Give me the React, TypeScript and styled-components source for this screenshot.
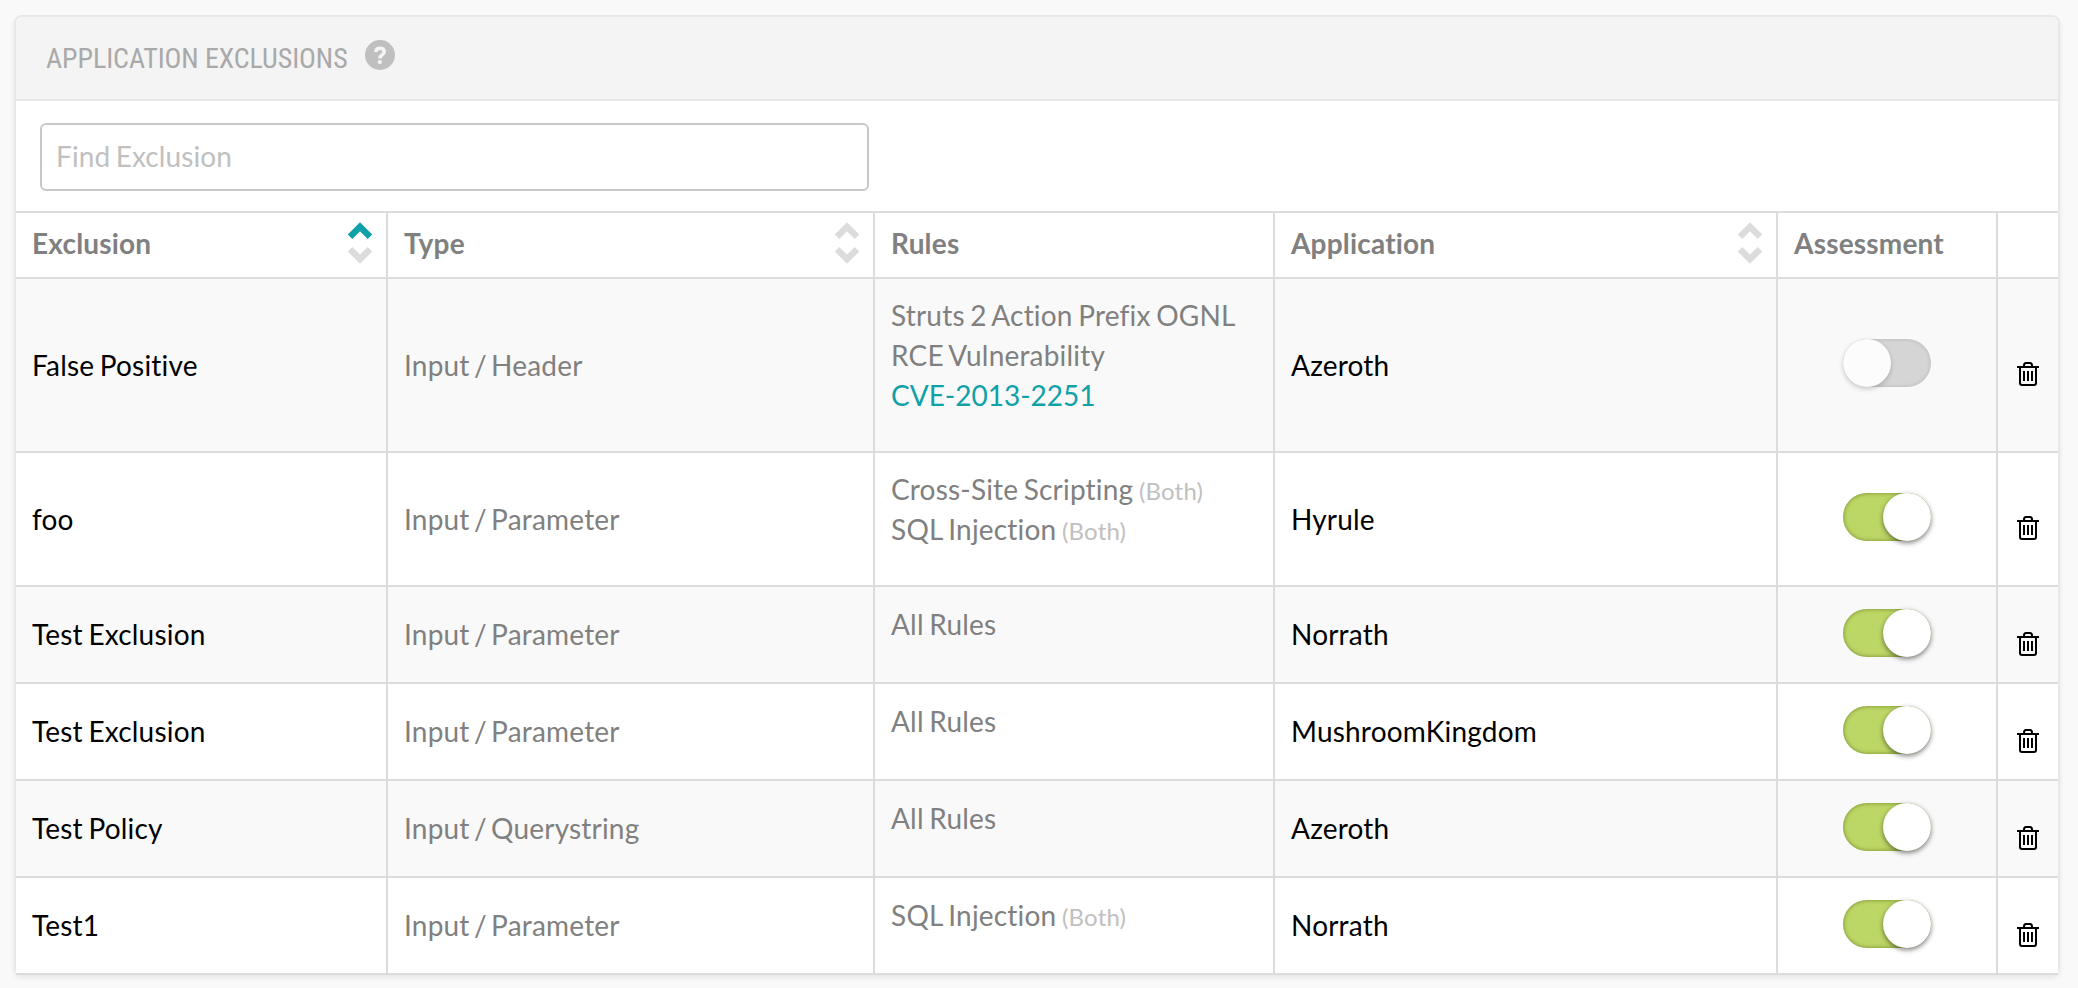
import React from "react";
import styled, { createGlobalStyle } from "styled-components";

const GlobalStyle = createGlobalStyle`
  * { box-sizing: border-box; }
  body {
    margin: 0;
    background: #f9f9f9;
    font-family: Lato, "Open Sans", sans-serif;
    font-size: 28px;
    line-height: 40px;
    letter-spacing: 0.19px;
    word-spacing: -1.8px;
    font-variant-ligatures: none;
    color: #808080;
  }
`;

const Page = styled.main`
  height: 988px;
  padding: 15px 18px 0 14px;
  overflow: hidden;
`;

const Panel = styled.section`
  border: 2px solid #e8e8e8;
  border-bottom: 0;
  border-radius: 8px;
  background: #fff;
  box-shadow: 0 3px 5px rgba(0, 0, 0, 0.08);
`;

const PanelHeader = styled.header`
  display: flex;
  align-items: center;
  height: 84px;
  padding-left: 30px;
  border-bottom: 2px solid #e8e8e8;
  border-radius: 6px 6px 0 0;
  background: #f4f4f4;
`;

const Title = styled.h1`
  width: 319px;
  margin: 2px 0 0;
  font-family: "Roboto Condensed", Roboto, sans-serif;
  font-stretch: 75%;
  font-size: 28px;
  font-weight: 400;
  letter-spacing: -0.08px;
  word-spacing: 0;
  white-space: nowrap;
  color: #a9a9a9;
`;

const HelpIcon = styled.svg`
  width: 30px;
  height: 30px;
  margin-top: -6px;
`;

const SearchBar = styled.div`
  height: 110px;
  padding: 22px 24px;
`;

const SearchInput = styled.input`
  display: block;
  width: 829px;
  height: 68px;
  padding: 0 14px 2px;
  border: 2px solid #c8c8c8;
  border-radius: 6px;
  background: #fff;
  font: inherit;
  letter-spacing: 0.1px;
  word-spacing: inherit;
  color: #808080;
  &::placeholder { color: #c0c0c0; opacity: 1; }
`;

const Table = styled.div`
  border-top: 2px solid #dcdcdc;
`;

const Row = styled.div<{ $height: number; $striped?: boolean }>`
  display: grid;
  grid-template-columns: 372px 487px 400px 503px 220px 60px;
  height: ${(p) => p.$height}px;
  border-bottom: 2px solid #dcdcdc;
  background: ${(p) => (p.$striped ? "#f9f9f9" : "#fff")};
`;

const Cell = styled.div<{ $strong?: boolean; $raise?: number }>`
  display: flex;
  align-items: center;
  padding: 0 14px ${(p) => p.$raise ?? 0}px 16px;
  border-right: 2px solid #dcdcdc;
  color: ${(p) => (p.$strong ? "#000" : "#808080")};
  &:last-child { border-right: 0; }
`;

const TypeCell = styled(Cell)`
  word-spacing: -3px;
`;

const HeadCell = styled(Cell)`
  justify-content: space-between;
  padding-bottom: 4px;
  font-weight: 700;
`;

const ControlCell = styled(Cell)`
  justify-content: center;
  padding: 0;
`;

const RuleList = styled.ul`
  margin: 0 0 20px;
  padding: 0;
  list-style: none;
  white-space: nowrap;
`;

const Scope = styled.small`
  font-size: 24px;
  line-height: 1;
  color: #c0c0c0;
`;

const CveLink = styled.a`
  letter-spacing: 0;
  color: #0ea1a8;
`;

const SortIcon = styled.svg`
  width: 24px;
  height: 42px;
`;

const Toggle = styled.button<{ $on: boolean; $lift: number }>`
  display: flex;
  justify-content: ${(p) => (p.$on ? "flex-end" : "flex-start")};
  width: 88px;
  height: 48px;
  margin-bottom: ${(p) => p.$lift}px;
  padding: 0;
  border: 0;
  border-radius: 24px;
  background: ${(p) => (p.$on ? "#bdd766" : "#d5d5d5")};
  box-shadow: inset 0 0 4px ${(p) => (p.$on ? "rgba(60, 80, 0, 0.6)" : "rgba(0, 0, 0, 0.14)")};
`;

const Knob = styled.span<{ $on: boolean }>`
  width: 48px;
  height: 48px;
  border-radius: 50%;
  background: ${(p) => (p.$on ? "#fff" : "#fcfcfc")};
  box-shadow: 0 2px 5px rgba(0, 0, 0, ${(p) => (p.$on ? 0.5 : 0.2)});
`;

const TrashIcon = styled.svg<{ $drop: number }>`
  width: 22px;
  height: 24px;
  margin-top: ${(p) => p.$drop}px;
`;

function Sort({ active = false }: { active?: boolean }) {
  return (
    <SortIcon viewBox="0 0 24 42" fill="none" strokeWidth="6.500">
      <path d="M2 14.800 12 4.800l10 10" stroke={active ? "#0ea1a8" : "#dcdcdc"} />
      <path d="M2 27.200 12 37.200l10-10" stroke="#dcdcdc" />
    </SortIcon>
  );
}

function Trash({ drop }: { drop: number }) {
  return (
    <TrashIcon $drop={drop} viewBox="0 0 22 24" fill="none" stroke="#000" strokeWidth="2">
      <path d="M0 5h22M7 5V3.500Q7 1 9 1h4q2 0 2 2.500V5M3 5v16q0 2 2 2h12q2 0 2-2V5M7 9v10M11 9v10M15 9v10" />
    </TrashIcon>
  );
}

type Rule = { text: string; scope?: boolean; link?: boolean };
type Exclusion = { name: string; type: string; rules: Rule[]; app: string; on: boolean; height: number };

const allRules: Rule[] = [{ text: "All Rules" }];

const exclusions: Exclusion[] = [
  {
    name: "False Positive",
    type: "Input / Header",
    rules: [{ text: "Struts 2 Action Prefix OGNL" }, { text: "RCE Vulnerability" }, { text: "CVE-2013-2251", link: true }],
    app: "Azeroth",
    on: false,
    height: 174,
  },
  {
    name: "foo",
    type: "Input / Parameter",
    rules: [{ text: "Cross-Site Scripting", scope: true }, { text: "SQL Injection", scope: true }],
    app: "Hyrule",
    on: true,
    height: 134,
  },
  { name: "Test Exclusion", type: "Input / Parameter", rules: allRules, app: "Norrath", on: true, height: 97 },
  { name: "Test Exclusion", type: "Input / Parameter", rules: allRules, app: "MushroomKingdom", on: true, height: 97 },
  { name: "Test Policy", type: "Input / Querystring", rules: allRules, app: "Azeroth", on: true, height: 97 },
  {
    name: "Test1",
    type: "Input / Parameter",
    rules: [{ text: "SQL Injection", scope: true }],
    app: "Norrath",
    on: true,
    height: 97,
  },
];

export default function App() {
  return (
    <Page>
      <GlobalStyle />
      <Panel>
        <PanelHeader>
          <Title>APPLICATION EXCLUSIONS</Title>
          <HelpIcon viewBox="0 0 30 30" fill="none">
            <circle cx="15" cy="15" r="15" fill="#bfbfbf" />
            <path d="M10.800 12Q11.200 8.200 15 8.200q4.200 0 4.200 3.600 0 1.800-2.200 3.200-2 1.200-2 3.400" stroke="#f4f4f4" strokeWidth="3.600" />
            <circle cx="14.800" cy="22" r="2.100" fill="#f4f4f4" />
          </HelpIcon>
        </PanelHeader>
        <SearchBar>
          <SearchInput placeholder="Find Exclusion" />
        </SearchBar>
        <Table>
          <Row $height={66}>
            <HeadCell>Exclusion<Sort active /></HeadCell>
            <HeadCell>Type<Sort /></HeadCell>
            <HeadCell>Rules</HeadCell>
            <HeadCell>Application<Sort /></HeadCell>
            <HeadCell>Assessment</HeadCell>
            <HeadCell />
          </Row>
          {exclusions.map((item, i) => {
            const odd = item.height % 2;
            return (
              <Row key={i} $height={item.height} $striped={i % 2 === 0}>
                <Cell $strong $raise={odd}>{item.name}</Cell>
                <TypeCell $raise={odd}>{item.type}</TypeCell>
                <Cell $raise={odd}>
                  <RuleList>
                    {item.rules.map((rule) => (
                      <li key={rule.text}>
                        {rule.link ? <CveLink>{rule.text}</CveLink> : rule.text}
                        {rule.scope && <> <Scope>(Both)</Scope></>}
                      </li>
                    ))}
                  </RuleList>
                </Cell>
                <Cell $strong $raise={odd}>{item.app}</Cell>
                <ControlCell>
                  <Toggle $on={item.on} $lift={odd ? 3 : 4} aria-label="Assessment">
                    <Knob $on={item.on} />
                  </Toggle>
                </ControlCell>
                <ControlCell>
                  <Trash drop={odd ? 19 : 18} />
                </ControlCell>
              </Row>
            );
          })}
        </Table>
      </Panel>
    </Page>
  );
}
